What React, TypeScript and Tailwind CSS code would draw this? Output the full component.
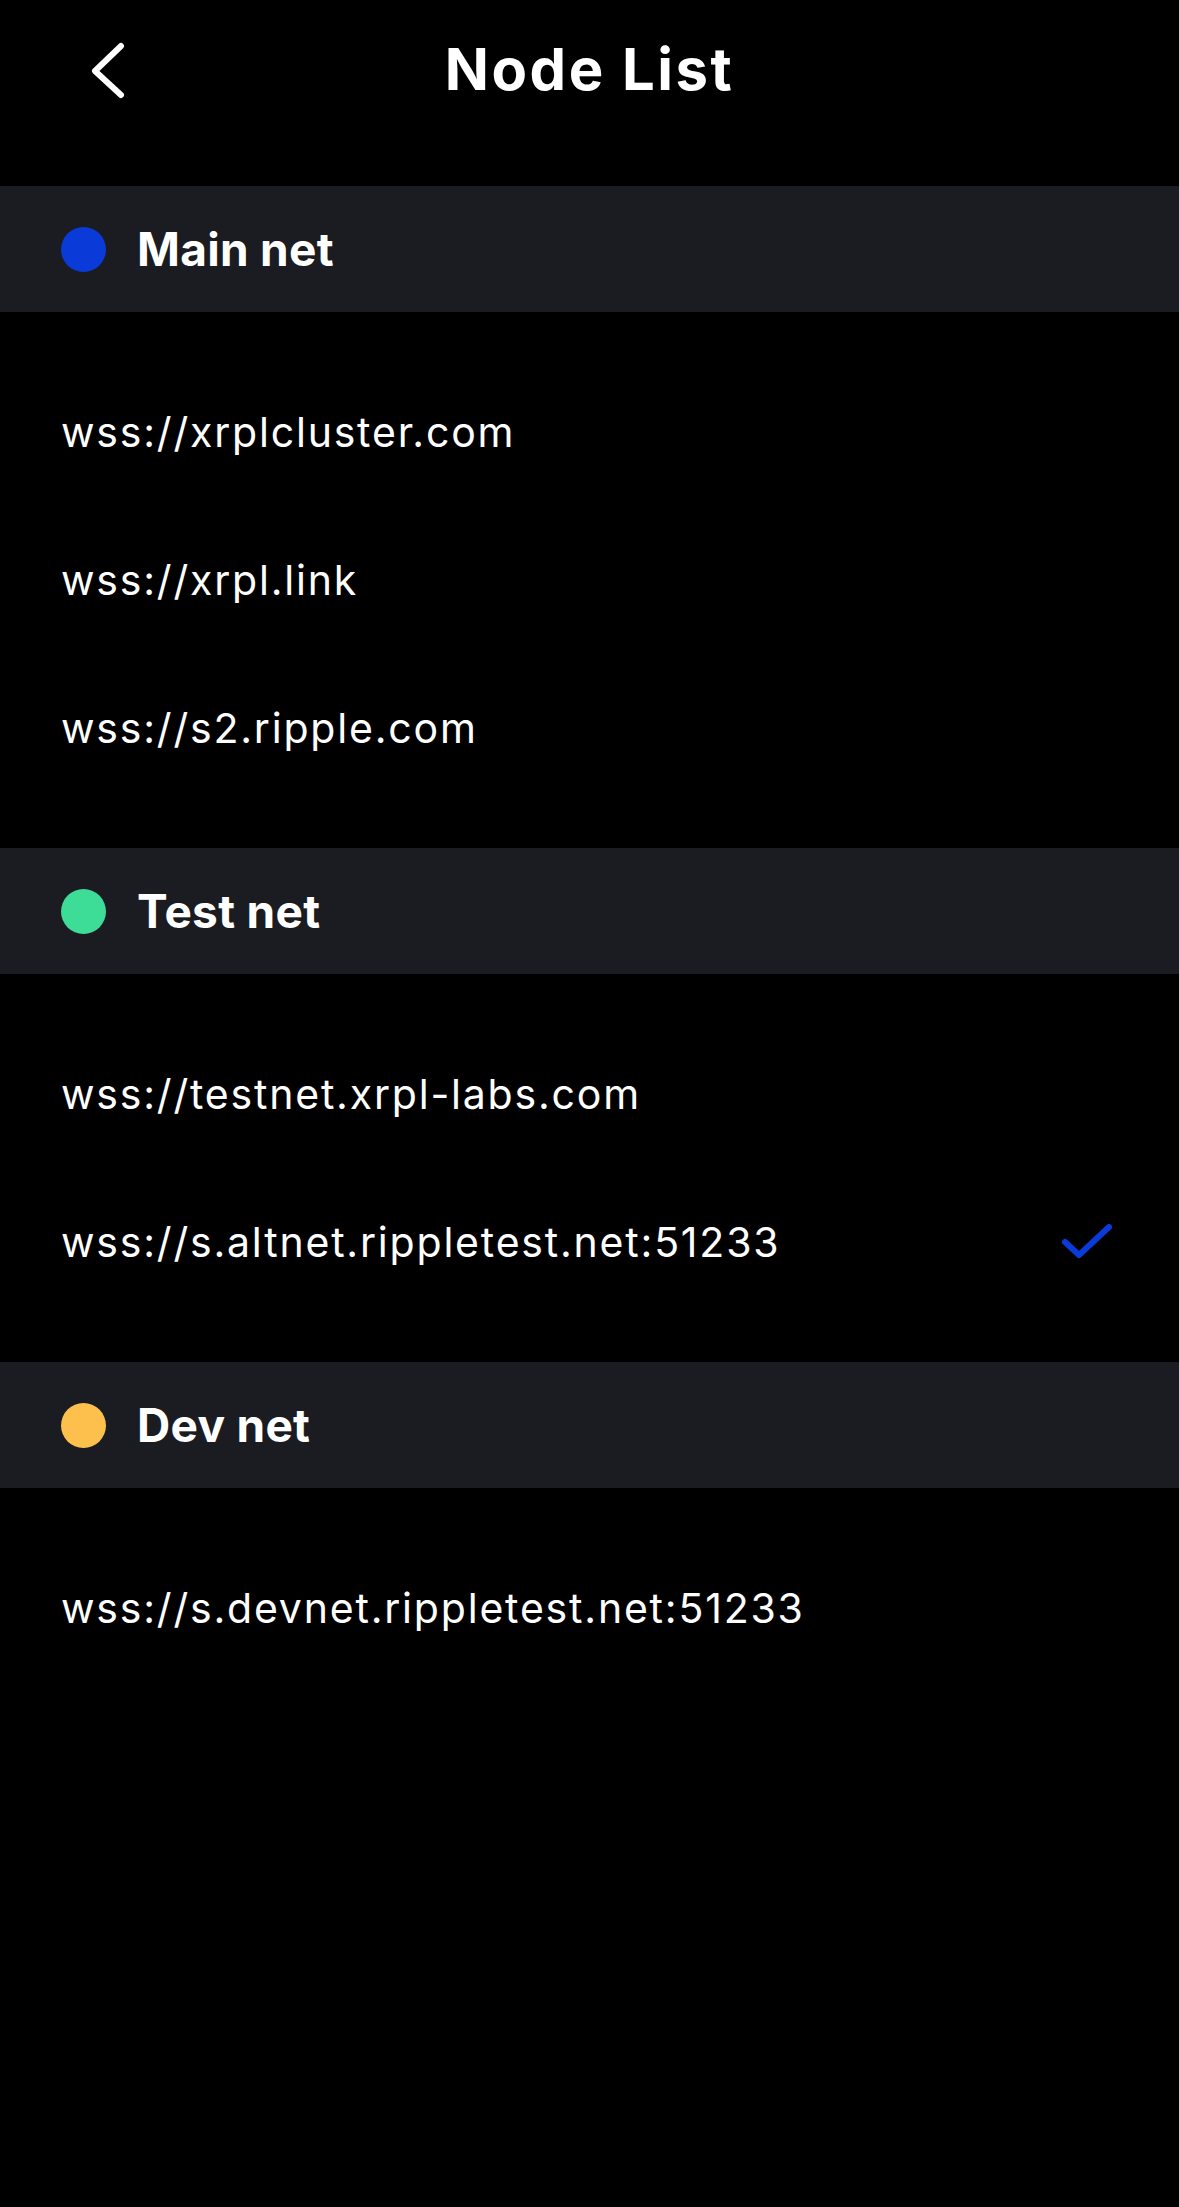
const sections = [
  {
    name: "Main net",
    dot: "bg-[#0a3ad8]",
    nodes: ["wss://xrplcluster.com", "wss://xrpl.link", "wss://s2.ripple.com"],
  },
  {
    name: "Test net",
    dot: "bg-[#3ddc97]",
    nodes: ["wss://testnet.xrpl-labs.com", "wss://s.altnet.rippletest.net:51233"],
  },
  {
    name: "Dev net",
    dot: "bg-[#fec04c]",
    nodes: ["wss://s.devnet.rippletest.net:51233"],
  },
];

const selected = "wss://s.altnet.rippletest.net:51233";

function Check() {
  return (
    <svg width="60" height="56" viewBox="0 0 60 56" fill="none">
      <path
        d="M8 27 L22 40 L52 12"
        stroke="#0a3ad8"
        strokeWidth="6"
        strokeLinecap="round"
        strokeLinejoin="round"
      />
    </svg>
  );
}

export default function App() {
  return (
    <div className="min-h-[2207px] w-[1179px] bg-black text-white font-['Inter','Liberation_Sans',sans-serif]">
      {/* nav bar */}
      <div className="relative flex h-[186px] items-start justify-center pt-[39px]">
        <button className="absolute left-[88px] top-[42px]">
          <svg width="40" height="58" viewBox="0 0 40 58" fill="none">
            <path
              d="M33 4 L7 29 L33 53"
              stroke="white"
              strokeWidth="6"
              strokeLinecap="round"
              strokeLinejoin="round"
            />
          </svg>
        </button>
        <h1 className="text-[58px] font-bold leading-[60px] tracking-[2.5px]">Node List</h1>
      </div>

      {sections.map((s) => (
        <div key={s.name}>
          <div className="flex h-[126px] items-center gap-[31px] bg-[#1b1c21] pl-[61px]">
            <span className={`h-[45px] w-[45px] rounded-full ${s.dot}`} />
            <span className="text-[46px] font-bold leading-none tracking-[0.3px]">{s.name}</span>
          </div>
          <div className="pt-[47px] pb-[45px]">
            {s.nodes.map((n) => (
              <div key={n} className="flex h-[148px] items-center justify-between pl-[61px] pr-[62px]">
                <span className="text-[41px] leading-normal tracking-[1.8px]">{n}</span>
                {n === selected && <Check />}
              </div>
            ))}
          </div>
        </div>
      ))}
    </div>
  );
}
